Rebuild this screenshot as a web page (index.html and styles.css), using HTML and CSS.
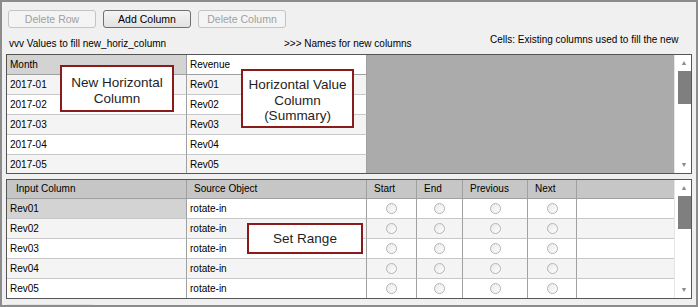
FILE: index.html
```html
<!DOCTYPE html>
<html lang="en">
<head>
  <meta charset="UTF-8" />
  <title>Horizontal Column Setup</title>
  <link rel="stylesheet" href="styles.css">
</head>
<body>
  <div class="frame">
    <!-- Toolbar -->
    <div class="toolbar">
      <button class="win-btn" disabled>Delete Row</button>
      <button class="win-btn">Add Column</button>
      <button class="win-btn" disabled>Delete Column</button>
    </div>

    <!-- Hints -->
    <div class="hints">
      <span class="hint hint-values">vvv Values to fill new_horiz_column</span>
      <span class="hint hint-names">&gt;&gt;&gt; Names for new columns</span>
      <span class="hint hint-cells">Cells: Existing columns used to fill the new</span>
    </div>

    <!-- Top grid: new columns -->
    <div class="grid grid-top">
      <div class="grid-body">
        <div class="row head">
          <div class="cell c-wide selected">Month</div>
          <div class="cell c-wide head-light">Revenue</div>
        </div>
        <div class="row alt"><div class="cell c-wide">2017-01</div><div class="cell c-wide">Rev01</div></div>
        <div class="row"><div class="cell c-wide">2017-02</div><div class="cell c-wide">Rev02</div></div>
        <div class="row alt"><div class="cell c-wide">2017-03</div><div class="cell c-wide">Rev03</div></div>
        <div class="row"><div class="cell c-wide">2017-04</div><div class="cell c-wide">Rev04</div></div>
        <div class="row alt"><div class="cell c-wide">2017-05</div><div class="cell c-wide">Rev05</div></div>
      </div>
      <div class="vscroll">
        <span class="arrow">&#9650;</span>
        <span class="thumb"></span>
        <span class="arrow arrow-down">&#9660;</span>
      </div>
    </div>

    <!-- Bottom grid: input columns -->
    <div class="grid grid-bottom">
      <div class="grid-body">
        <div class="row head">
          <div class="cell c-wide c-first">Input Column</div>
          <div class="cell c-wide">Source Object</div>
          <div class="cell c-start">Start</div>
          <div class="cell c-end">End</div>
          <div class="cell c-prev">Previous</div>
          <div class="cell c-next">Next</div>
          <div class="cell c-fill"></div>
        </div>
        <div class="row">
          <div class="cell c-wide selected">Rev01</div><div class="cell c-wide">rotate-in</div>
          <div class="cell c-start radio-cell"><span class="radio"></span></div>
          <div class="cell c-end radio-cell"><span class="radio"></span></div>
          <div class="cell c-prev radio-cell"><span class="radio"></span></div>
          <div class="cell c-next radio-cell"><span class="radio"></span></div>
          <div class="cell c-fill"></div>
        </div>
        <div class="row alt">
          <div class="cell c-wide">Rev02</div><div class="cell c-wide">rotate-in</div>
          <div class="cell c-start radio-cell"><span class="radio"></span></div>
          <div class="cell c-end radio-cell"><span class="radio"></span></div>
          <div class="cell c-prev radio-cell"><span class="radio"></span></div>
          <div class="cell c-next radio-cell"><span class="radio"></span></div>
          <div class="cell c-fill"></div>
        </div>
        <div class="row">
          <div class="cell c-wide">Rev03</div><div class="cell c-wide">rotate-in</div>
          <div class="cell c-start radio-cell"><span class="radio"></span></div>
          <div class="cell c-end radio-cell"><span class="radio"></span></div>
          <div class="cell c-prev radio-cell"><span class="radio"></span></div>
          <div class="cell c-next radio-cell"><span class="radio"></span></div>
          <div class="cell c-fill"></div>
        </div>
        <div class="row alt">
          <div class="cell c-wide">Rev04</div><div class="cell c-wide">rotate-in</div>
          <div class="cell c-start radio-cell"><span class="radio"></span></div>
          <div class="cell c-end radio-cell"><span class="radio"></span></div>
          <div class="cell c-prev radio-cell"><span class="radio"></span></div>
          <div class="cell c-next radio-cell"><span class="radio"></span></div>
          <div class="cell c-fill"></div>
        </div>
        <div class="row">
          <div class="cell c-wide">Rev05</div><div class="cell c-wide">rotate-in</div>
          <div class="cell c-start radio-cell"><span class="radio"></span></div>
          <div class="cell c-end radio-cell"><span class="radio"></span></div>
          <div class="cell c-prev radio-cell"><span class="radio"></span></div>
          <div class="cell c-next radio-cell"><span class="radio"></span></div>
          <div class="cell c-fill"></div>
        </div>
      </div>
      <div class="vscroll">
        <span class="arrow">&#9650;</span>
        <span class="thumb"></span>
        <span class="arrow arrow-down">&#9660;</span>
      </div>
    </div>
    <div class="hscroll"><span class="hthumb"></span></div>

    <!-- Callouts -->
    <div class="callout callout-new">New Horizontal<br>Column</div>
    <div class="callout callout-value">Horizontal Value<br>Column<br>(Summary)</div>
    <div class="callout callout-range">Set Range</div>
  </div>
</body>
</html>
```

FILE: styles.css
```css
/* Base */
body {
  margin: 0;
  font-family: "Liberation Sans", Arial, sans-serif;
  font-size: 10px;
  color: #000;
}
.frame {
  position: relative;
  width: 698px;
  height: 307px;
  box-sizing: border-box;
  border: 2px solid #8c8c8c;
  background: #f0f0f0;
  padding: 8px 6px 0 4px;
  overflow: hidden;
}

/* Toolbar buttons */
.toolbar {
  display: flex;
  gap: 7px;
  margin-left: 2px;
}
.win-btn {
  width: 88px;
  height: 18px;
  padding: 0;
  font-family: inherit;
  font-size: 10.5px;
  color: #000;
  background: linear-gradient(#f4f4f4, #e2e2e2);
  border: 1px solid #707070;
  border-radius: 3px;
}
.win-btn:disabled {
  color: #a0a0a0;
  background: #f4f4f4;
  border-color: #c4c4c4;
}

/* Hint labels */
.hints {
  position: relative;
  height: 16px;
  margin-top: 9px;
  margin-bottom: 1px;
}
.hint {
  position: absolute;
  white-space: nowrap;
}
.hint-values { left: 3px; top: 1px; }
.hint-names { left: 278px; top: 1px; }
.hint-cells { left: 484px; top: -3px; }

/* Grids */
.grid {
  display: flex;
  border: 1px solid #555;
  width: 684px;
  overflow: hidden;
}
.grid-top {
  height: 118px;
}
.grid-bottom {
  height: 118px;
  margin-top: 5px;
}
.grid-body {
  flex: 1;
  overflow: hidden;
}
.grid-top .grid-body {
  background: #ababab;
}
.grid-bottom .grid-body {
  background: #fff;
}
.row {
  display: flex;
  height: 20px;
}
.cell {
  box-sizing: border-box;
  height: 20px;
  line-height: 19px;
  padding-left: 3px;
  background: #fff;
  border-right: 1px solid #a0a0a0;
  border-bottom: 1px solid #c8c8c8;
  white-space: nowrap;
  overflow: hidden;
}
.row.alt .cell {
  background: #f4f4f4;
}
.c-wide { width: 180px; }
.c-start { width: 50px; }
.c-end { width: 46px; }
.c-prev { width: 65px; }
.c-next { width: 49px; }
.c-fill { flex: 1; border-right: none; }

.row.head .cell {
  background: #d3d3d3;
  border-bottom-color: #a0a0a0;
}
.row.head .head-light {
  background: #fff;
}
.grid-bottom .row.head .cell {
  background: #c6c6c6;
  padding-left: 7px;
  line-height: 18px;
  height: 19px;
}
.grid-bottom .row.head .c-first {
  padding-left: 9px;
}
.grid-bottom .row.head {
  height: 19px;
}
.row .cell.selected,
.row.alt .cell.selected {
  background: #d3d3d3;
}

/* Radio buttons */
.radio-cell {
  display: flex;
  align-items: center;
  justify-content: center;
  padding-left: 0;
}
.radio {
  width: 9px;
  height: 9px;
  border-radius: 50%;
  border: 1px solid #b4b4b4;
  background: linear-gradient(135deg, #e8e8e8, #fff);
}

/* Scrollbars */
.vscroll {
  width: 16px;
  background: #fff;
  border-left: 1px solid #e6e6e6;
  display: flex;
  flex-direction: column;
  align-items: flex-end;
}
.arrow {
  width: 14px;
  height: 16px;
  font-size: 7px;
  line-height: 16px;
  text-align: center;
  color: #8a8a8a;
}
.arrow-down {
  margin-top: auto;
}
.thumb {
  width: 13px;
  height: 33px;
  background: #7f7f7f;
}
.hscroll {
  height: 8px;
  margin-top: 5px;
  margin-left: 1px;
}
.hthumb {
  display: block;
  width: 86px;
  height: 3px;
  background: #e4e4e4;
}

/* Annotation callouts */
.callout {
  position: absolute;
  box-sizing: border-box;
  background: #fff;
  border: 2px solid #8b1a1a;
  font-size: 13.5px;
  line-height: 16px;
  text-align: center;
  color: #1e1e1e;
}
.callout-new {
  left: 58px;
  top: 63px;
  width: 114px;
  height: 47px;
  padding-top: 8px;
}
.callout-value {
  left: 239px;
  top: 67px;
  width: 113px;
  height: 59px;
  padding-top: 6px;
  line-height: 15.5px;
}
.callout-range {
  left: 245px;
  top: 221px;
  width: 116px;
  height: 31px;
  line-height: 27px;
}
```
